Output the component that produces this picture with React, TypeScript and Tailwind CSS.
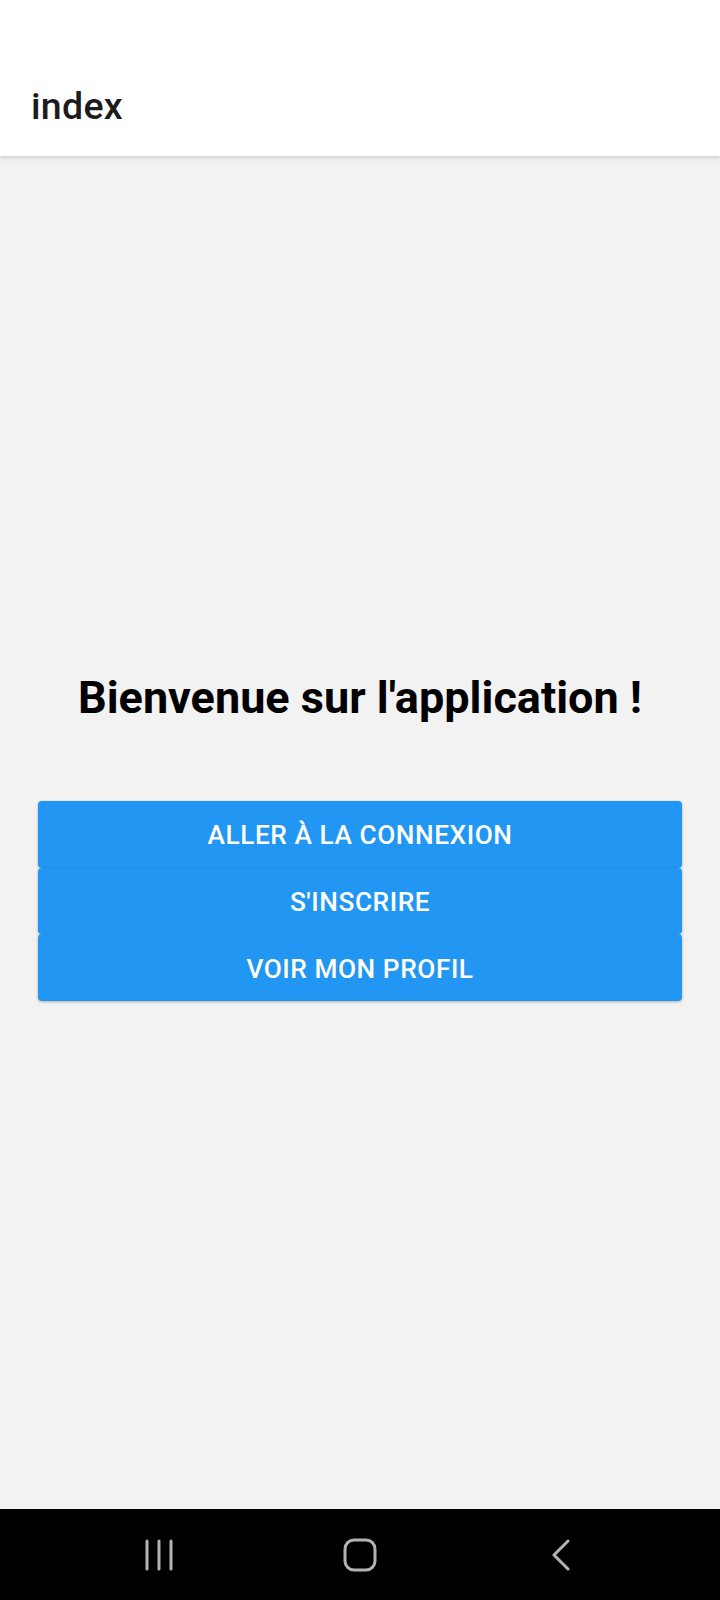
import React from "react";

export default function App() {
  const buttons = ["ALLER À LA CONNEXION", "S'INSCRIRE", "VOIR MON PROFIL"];
  return (
    <div className="w-[720px] h-[1600px] flex flex-col bg-[#f2f2f2] font-['Roboto',sans-serif] overflow-hidden">
      <header className="relative z-10 h-[156px] shrink-0 bg-white shadow-[0_2px_4px_rgba(0,0,0,0.14)] pt-[84px] pl-[31px]">
        <h1 className="text-[37.5px] leading-[44px] font-medium text-[#1c1c1c] tracking-[0.3px]">index</h1>
      </header>
      <main className="flex-1 flex flex-col justify-center px-[38px] pt-[7px]">
        <h2 className="text-center text-[45px] leading-[53px] font-bold text-black mb-[77px]">
          Bienvenue sur l'application !
        </h2>
        <div className="flex flex-col">
          {buttons.map((b) => (
            <button
              key={b}
              className="h-[66.7px] w-full flex items-center justify-center pt-[2px] bg-[#2196f3] rounded-[4px] shadow-[0_1px_3px_rgba(0,0,0,0.28)] text-white text-[26.25px] font-medium leading-none tracking-[0.55px]"
            >
              {b}
            </button>
          ))}
        </div>
      </main>
      <nav className="h-[91px] shrink-0 bg-black flex justify-center items-center">
        <div className="w-[201px] flex justify-center">
          <svg width="30" height="32" viewBox="0 0 30 32" fill="none" stroke="#b3b3b3" strokeWidth="3" strokeLinecap="round">
            <line x1="3" y1="2" x2="3" y2="30" />
            <line x1="15" y1="2" x2="15" y2="30" />
            <line x1="27" y1="2" x2="27" y2="30" />
          </svg>
        </div>
        <div className="w-[201px] flex justify-center">
          <svg width="34" height="34" viewBox="0 0 34 34" fill="none" stroke="#b3b3b3" strokeWidth="3">
            <rect x="2" y="2" width="30" height="30" rx="9" />
          </svg>
        </div>
        <div className="w-[201px] flex justify-center">
          <svg width="20" height="32" viewBox="0 0 20 32" fill="none" stroke="#b3b3b3" strokeWidth="3" strokeLinecap="round" strokeLinejoin="round">
            <polyline points="17,2 3,16 17,30" />
          </svg>
        </div>
      </nav>
    </div>
  );
}
